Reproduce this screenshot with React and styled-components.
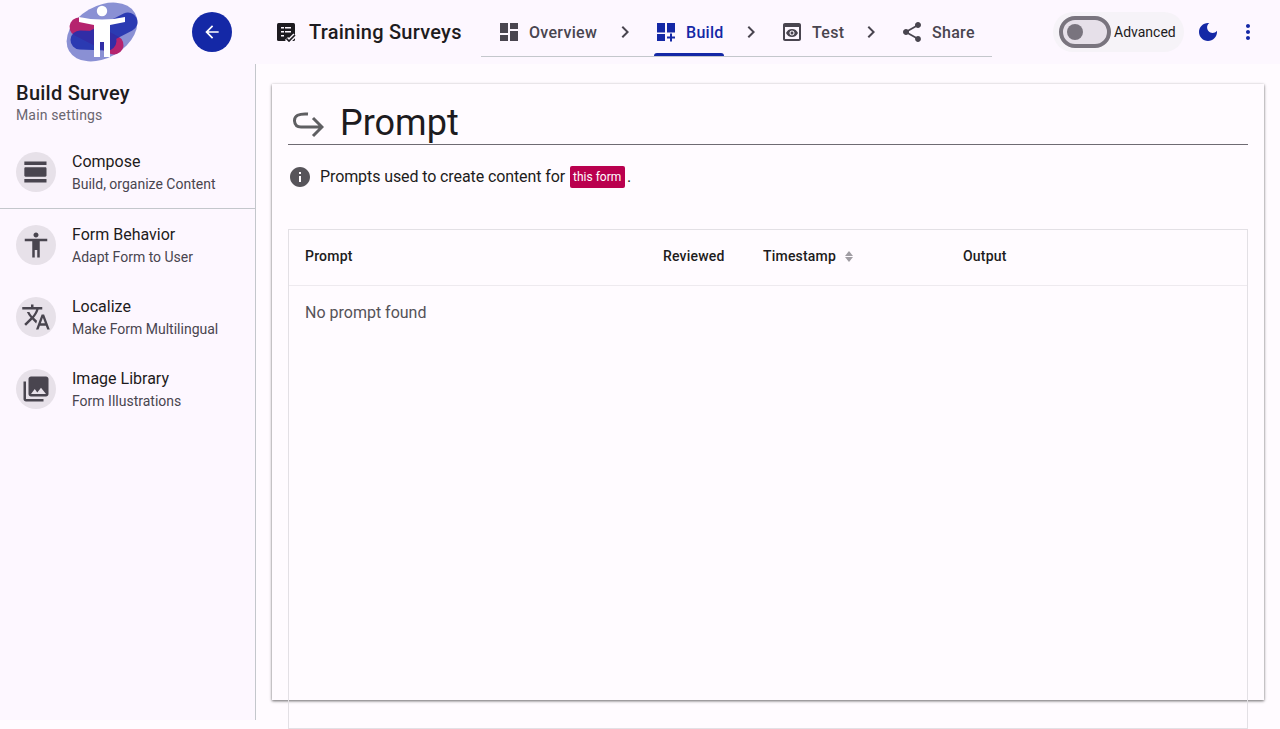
import React from 'react';
import styled, { createGlobalStyle } from 'styled-components';

const GlobalStyle = createGlobalStyle`
  html, body {
    margin: 0;
    height: 100%;
    overflow: hidden;
    background: #fffbff;
  }
  body {
    font-family: Roboto, "Liberation Sans", sans-serif;
    color: #1d1b20;
  }
`;

const paths = {
  dashboard: 'M3 13h8V3H3v10zm0 8h8v-6H3v6zm10 0h8V11h-8v10zm0-18v6h8V3h-8z',
  build: 'M3 12.5h8V3H3zM3 21h8v-7H3zM13 3v9.5h8V3zM18 13.5h-2v3h-3v2h3v3h2v-3h3v-2h-3z',
  preview: 'M19 3H5c-1.11 0-2 .9-2 2v14c0 1.1.89 2 2 2h14c1.1 0 2-.9 2-2V5c0-1.1-.89-2-2-2zm0 16H5V7h14v12zm-5.5-6c0 .83-.67 1.5-1.5 1.5s-1.5-.67-1.5-1.5.67-1.5 1.5-1.5 1.5.67 1.5 1.5zM12 9c-2.73 0-5.06 1.66-6 4 .94 2.34 3.27 4 6 4s5.06-1.66 6-4c-.94-2.34-3.27-4-6-4zm0 6.5c-1.38 0-2.5-1.12-2.5-2.5s1.12-2.5 2.5-2.5 2.5 1.12 2.5 2.5-1.12 2.5-2.5 2.5z',
  share: 'M18 16.08c-.76 0-1.44.3-1.96.77L8.91 12.7c.05-.23.09-.46.09-.7s-.04-.47-.09-.7l7.05-4.11c.54.5 1.25.81 2.04.81 1.66 0 3-1.34 3-3s-1.34-3-3-3-3 1.34-3 3c0 .24.04.47.09.7L8.04 9.81C7.5 9.31 6.79 9 6 9c-1.66 0-3 1.34-3 3s1.34 3 3 3c.79 0 1.5-.31 2.04-.81l7.12 4.16c-.05.21-.08.43-.08.65 0 1.61 1.31 2.92 2.92 2.92 1.61 0 2.92-1.31 2.92-2.92s-1.31-2.92-2.92-2.92z',
  chevron: 'M10 6 8.59 7.41 13.17 12l-4.58 4.59L10 18l6-6z',
  moon: 'M12 3c-4.97 0-9 4.03-9 9s4.03 9 9 9 9-4.03 9-9c0-.46-.04-.92-.1-1.36-.98 1.37-2.58 2.26-4.4 2.26-2.98 0-5.4-2.42-5.4-5.4 0-1.81.89-3.42 2.26-4.4-.44-.06-.9-.1-1.36-.1z',
  more: 'M12 8c1.1 0 2-.9 2-2s-.9-2-2-2-2 .9-2 2 .9 2 2 2zm0 2c-1.1 0-2 .9-2 2s.9 2 2 2 2-.9 2-2-.9-2-2-2zm0 6c-1.1 0-2 .9-2 2s.9 2 2 2 2-.9 2-2-.9-2-2-2z',
  back: 'M20 11H7.83l5.59-5.59L12 4l-8 8 8 8 1.41-1.41L7.83 13H20v-2z',
  viewDay: 'M2 21h19v-3H2v3zM20 8H3c-.55 0-1 .45-1 1v6c0 .55.45 1 1 1h17c.55 0 1-.45 1-1V9c0-.55-.45-1-1-1zM2 3v3h19V3H2z',
  accessibility: 'M12 2c1.1 0 2 .9 2 2s-.9 2-2 2-2-.9-2-2 .9-2 2-2zm9 7h-6v13h-2v-6h-2v6H9V9H3V7h18v2z',
  translate: 'M12.87 15.07l-2.54-2.51.03-.03c1.74-1.94 2.98-4.17 3.71-6.53H17V4h-7V2H8v2H1v1.99h11.17C11.5 7.92 10.44 9.75 9 11.35 8.07 10.32 7.3 9.19 6.69 8h-2c.73 1.63 1.73 3.17 2.98 4.56l-5.09 5.02L4 19l5-5 3.11 3.11.76-2.04zM18.5 10h-2L12 22h2l1.12-3h4.75L21 22h2l-4.5-12zm-2.62 7l1.62-4.33L19.12 17h-3.24z',
  photos: 'M22 16V4c0-1.1-.9-2-2-2H8c-1.1 0-2 .9-2 2v12c0 1.1.9 2 2 2h12c1.1 0 2-.9 2-2zm-11-4l2.03 2.71L16 11l4 5H8l3-4zM2 6v14c0 1.1.9 2 2 2h14v-2H4V6H2z',
  info: 'M12 2C6.48 2 2 6.48 2 12s4.48 10 10 10 10-4.48 10-10S17.52 2 12 2zm1 15h-2v-6h2v6zm0-8h-2V7h2v2z',
};

const Svg = styled.svg`
  display: block;
  flex: none;
  width: ${(p) => p.$size || 24}px;
  height: ${(p) => p.$size || 24}px;
  fill: ${(p) => p.$color || '#49454f'};
`;

const Icon = ({ name, size, color }) => (
  <Svg viewBox="0 0 24 24" $size={size} $color={color}>
    <path d={paths[name]} />
  </Svg>
);

const Logo = () => (
  <LogoSvg viewBox="0 0 74 62">
    <ellipse cx="37" cy="31" rx="38" ry="26" transform="rotate(-30 37 31)" fill="#8a90d4" />
    <line x1="14" y1="26" x2="49" y2="44" stroke="#b5246e" strokeWidth="19" strokeLinecap="round" />
    <g stroke="#1f2fae" strokeWidth="19" strokeLinecap="round" opacity="0.88">
      <line x1="63" y1="21" x2="30" y2="38" />
      <line x1="15" y1="39" x2="42" y2="40" />
    </g>
    <circle cx="37" cy="10" r="5.2" fill="#fff" />
    <path d="M14 16Q37 21 60 16L60 21 45 24 45 56 39 56 39 41 35 41 35 56 29 56 29 24 14 21Z" fill="#fff" />
  </LogoSvg>
);

const SurveyIcon = () => (
  <Svg viewBox="0 0 20 20" $size={20} $color="#1d1b20">
    <rect x="1" y="1" width="18" height="18" rx="1.5" />
    <path d="M5 5h3v1.6H5zM9 5h6v1.6H9zM5 9h3v1.6H5zM9 9h6v1.6H9zM5 13h3v1.6H5z" fill="#fdf7ff" />
    <path d="M10.5 16.5l2.5 2.5 6-6" fill="none" stroke="#fdf7ff" strokeWidth="4.5" />
    <path d="M10.5 16.5l2.5 2.5 6-6" fill="none" stroke="#1d1b20" strokeWidth="1.7" />
  </Svg>
);

const HookArrow = () => (
  <Svg viewBox="0 0 32 32" $size={32} $color="none">
    <path d="M16 7Q2 6 2.5 14 3 20 9 20H30M21 11L30 20 21 29" fill="none" stroke="#5f5f62" strokeWidth="3" />
  </Svg>
);

const Shell = styled.div`
  height: 100vh;
  display: flex;
  flex-direction: column;
`;

const TopBar = styled.header`
  height: 64px;
  flex: none;
  display: flex;
  align-items: center;
  background: #fdf7ff;
`;

const LogoSvg = styled.svg`
  display: block;
  flex: none;
  width: 74px;
  height: 62px;
  margin: 0 53px 0 65px;
`;

const BackButton = styled.button`
  width: 40px;
  height: 40px;
  flex: none;
  padding: 0;
  border: 0;
  border-radius: 50%;
  background: #1428a6;
  display: flex;
  align-items: center;
  justify-content: center;
`;

const SurveyTitle = styled.div`
  display: flex;
  align-items: center;
  gap: 13px;
  width: 205px;
  margin-left: 44px;
  font-size: 20px;
  font-weight: 500;
  letter-spacing: 0.25px;
  white-space: nowrap;
`;

const Steps = styled.nav`
  width: 511px;
  height: 48px;
  display: flex;
  align-items: stretch;
  border-bottom: 1px solid #c4c7cc;
  align-self: flex-start;
  margin-top: 8px;
`;

const Step = styled.div`
  position: relative;
  display: flex;
  align-items: center;
  gap: 8px;
  flex: none;
  width: ${(p) => p.$width}px;
  padding-left: ${(p) => p.$pad || 0}px;
  box-sizing: border-box;
  font-size: 16px;
  font-weight: 500;
  letter-spacing: 0.3px;
  color: ${(p) => (p.$active ? '#1428a6' : '#49454f')};
  white-space: nowrap;
`;

const StepMark = styled.span`
  position: absolute;
  left: 0;
  right: 0;
  bottom: 0;
  height: 3px;
  border-radius: 3px 3px 0 0;
  background: #1428a6;
`;

const StepArrow = styled.div`
  display: flex;
  align-items: center;
  flex: none;
  width: ${(p) => p.$width}px;
  padding-left: ${(p) => p.$pad}px;
  box-sizing: border-box;
`;

const BarActions = styled.div`
  display: flex;
  align-items: center;
  margin-left: 61px;
`;

const TogglePill = styled.div`
  display: flex;
  align-items: center;
  width: 131px;
  height: 40px;
  box-sizing: border-box;
  padding-left: 6px;
  gap: 3px;
  border-radius: 20px;
  background: #f6f3f8;
  font-size: 14px;
  color: #1d1b20;
`;

const SwitchTrack = styled.span`
  position: relative;
  width: 52px;
  height: 32px;
  flex: none;
  box-sizing: border-box;
  border: 4px solid #79747e;
  border-radius: 16px;
  background: #e6e0e9;
`;

const SwitchThumb = styled.span`
  position: absolute;
  left: 4px;
  top: 4px;
  width: 16px;
  height: 16px;
  border-radius: 50%;
  background: #79747e;
`;

const RoundAction = styled.div`
  width: 40px;
  height: 40px;
  display: flex;
  align-items: center;
  justify-content: center;
  margin-left: ${(p) => p.$left || 0}px;
`;

const Body = styled.div`
  flex: 1;
  display: flex;
  align-items: flex-start;
`;

const Sidebar = styled.aside`
  width: 256px;
  height: 656px;
  flex: none;
  box-sizing: border-box;
  border-right: 1px solid #c4c7cc;
  background: #fdf7ff;
`;

const SideHead = styled.div`
  padding: 16px 16px 12px;
`;

const SideTitle = styled.div`
  font-size: 20px;
  font-weight: 500;
  line-height: 26px;
  letter-spacing: 0.25px;
`;

const SideSub = styled.div`
  font-size: 14px;
  line-height: 18px;
  letter-spacing: 0.15px;
  color: #6a6670;
`;

const SideItem = styled.div`
  display: flex;
  align-items: center;
  gap: 16px;
  padding: 0 16px;
  box-sizing: border-box;
  border-bottom: ${(p) => (p.$divided ? '1px solid #c4c7cc' : '0')};
  height: ${(p) => (p.$divided ? 73 : 72)}px;
`;

const SideIconWrap = styled.div`
  width: 40px;
  height: 40px;
  flex: none;
  border-radius: 50%;
  background: #e7e1e9;
  display: flex;
  align-items: center;
  justify-content: center;
`;

const SideLabel = styled.div`
  font-size: 16px;
  line-height: 24px;
`;

const SideHint = styled.div`
  font-size: 14px;
  line-height: 20px;
  color: #49454f;
`;

const Main = styled.main`
  flex: 1;
  padding: 20px 16px 0;
  min-width: 0;
`;

const Card = styled.section`
  height: 616px;
  box-sizing: border-box;
  padding: 16px;
  background: #fffbff;
  box-shadow: 0 1px 3px rgba(0, 0, 0, 0.45), 0 1px 2px rgba(0, 0, 0, 0.2);
`;

const CardHead = styled.div`
  height: 42px;
  padding: 2px 0 0 4px;
  display: flex;
  align-items: center;
  gap: 16px;
  border-bottom: 1px solid #6f6b73;
  font-size: 36px;
  line-height: 44px;
`;

const HintRow = styled.div`
  display: flex;
  align-items: center;
  gap: 8px;
  margin-top: 20px;
  height: 24px;
  font-size: 16px;
`;

const HintText = styled.span`
  letter-spacing: -0.1px;
`;

const Chip = styled.span`
  display: inline-block;
  vertical-align: 1px;
  margin: 0 2px 0 5px;
  padding: 0 3px;
  width: 49px;
  height: 22px;
  line-height: 22px;
  border-radius: 2px;
  background: #ba004e;
  color: #fff;
  font-size: 12px;
  letter-spacing: 0;
`;

const Table = styled.div`
  margin-top: 40px;
  height: 500px;
  box-sizing: border-box;
  border: 1px solid #e3e0e5;
`;

const HeadRow = styled.div`
  height: 56px;
  padding-bottom: 3px;
  display: grid;
  grid-template-columns: 358px 100px 200px 1fr;
  align-items: center;
  box-sizing: border-box;
  border-bottom: 1px solid #eeeaef;
`;

const HeadCell = styled.div`
  display: flex;
  align-items: center;
  gap: 9px;
  padding-left: 16px;
  font-size: 14px;
  font-weight: 500;
  letter-spacing: 0.2px;
`;

const SortMark = styled.span`
  display: flex;
  flex-direction: column;
  gap: 1px;
  &::before, &::after {
    content: '';
    width: 0;
    height: 0;
    border-left: 4px solid transparent;
    border-right: 4px solid transparent;
  }
  &::before {
    border-bottom: 5px solid #a09da3;
  }
  &::after {
    border-top: 5px solid #a09da3;
  }
`;

const EmptyRow = styled.div`
  padding: 16px;
  font-size: 16px;
  line-height: 22px;
  color: #555258;
`;

const sideItems = [
  { icon: 'viewDay', size: 28, label: 'Compose', hint: 'Build, organize Content', divided: true },
  { icon: 'accessibility', size: 30, label: 'Form Behavior', hint: 'Adapt Form to User' },
  { icon: 'translate', size: 30, label: 'Localize', hint: 'Make Form Multilingual' },
  { icon: 'photos', size: 30, label: 'Image Library', hint: 'Form Illustrations' },
];

export default function App() {
  return (
    <Shell>
      <GlobalStyle />
      <TopBar>
        <Logo />
        <BackButton>
          <Icon name="back" size={20} color="#fff" />
        </BackButton>
        <SurveyTitle>
          <SurveyIcon />
          Training Surveys
        </SurveyTitle>
        <Steps>
          <Step $width={132} $pad={16}>
            <Icon name="dashboard" />
            Overview
          </Step>
          <StepArrow $width={41} $pad={0}>
            <Icon name="chevron" />
          </StepArrow>
          <Step $width={70} $active>
            <Icon name="build" color="#1428a6" />
            Build
            <StepMark />
          </Step>
          <StepArrow $width={56} $pad={15}>
            <Icon name="chevron" />
          </StepArrow>
          <Step $width={64}>
            <Icon name="preview" />
            Test
          </Step>
          <StepArrow $width={56} $pad={15}>
            <Icon name="chevron" />
          </StepArrow>
          <Step $width={90}>
            <Icon name="share" />
            Share
          </Step>
        </Steps>
        <BarActions>
          <TogglePill>
            <SwitchTrack>
              <SwitchThumb />
            </SwitchTrack>
            Advanced
          </TogglePill>
          <RoundAction $left={4}>
            <Icon name="moon" color="#1428a6" />
          </RoundAction>
          <RoundAction>
            <Icon name="more" color="#1428a6" />
          </RoundAction>
        </BarActions>
      </TopBar>
      <Body>
        <Sidebar>
          <SideHead>
            <SideTitle>Build Survey</SideTitle>
            <SideSub>Main settings</SideSub>
          </SideHead>
          {sideItems.map((item) => (
            <SideItem key={item.label} $divided={item.divided}>
              <SideIconWrap>
                <Icon name={item.icon} size={item.size} />
              </SideIconWrap>
              <div>
                <SideLabel>{item.label}</SideLabel>
                <SideHint>{item.hint}</SideHint>
              </div>
            </SideItem>
          ))}
        </Sidebar>
        <Main>
          <Card>
            <CardHead>
              <HookArrow />
              Prompt
            </CardHead>
            <HintRow>
              <Icon name="info" size={24} color="#57545a" />
              <HintText>
                Prompts used to create content for<Chip>this form</Chip>.
              </HintText>
            </HintRow>
            <Table>
              <HeadRow>
                <HeadCell>Prompt</HeadCell>
                <HeadCell>Reviewed</HeadCell>
                <HeadCell>
                  Timestamp
                  <SortMark />
                </HeadCell>
                <HeadCell>Output</HeadCell>
              </HeadRow>
              <EmptyRow>No prompt found</EmptyRow>
            </Table>
          </Card>
        </Main>
      </Body>
    </Shell>
  );
}
